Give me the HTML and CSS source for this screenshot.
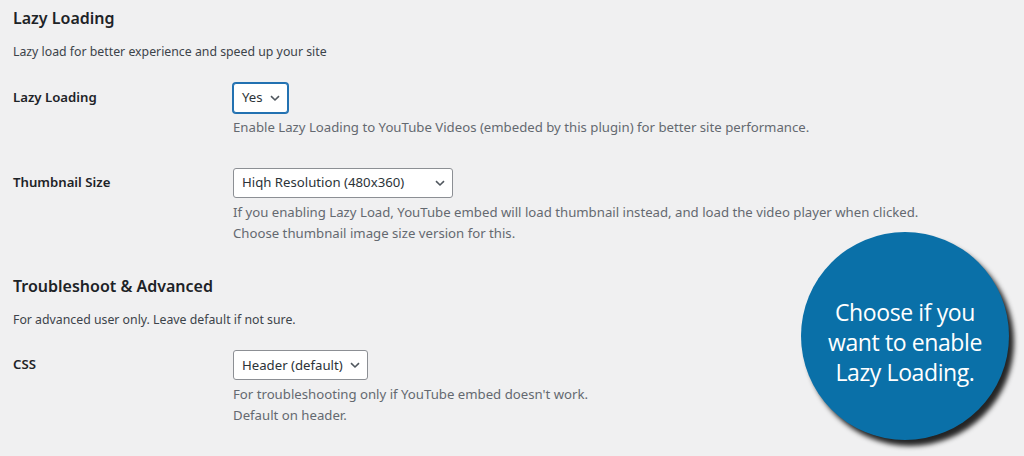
FILE: index.html
```html
<!DOCTYPE html>
<html lang="en">
<head>
	<meta charset="UTF-8">
	<title>Lazy Loading settings</title>
	<link rel="stylesheet" href="styles.css">
</head>
<body>
<div class="wrap">
	<div class="section">
		<h2>Lazy Loading</h2>
		<p class="intro">Lazy load for better experience and speed up your site</p>
		<table class="form-table">
			<tr>
				<th>Lazy Loading</th>
				<td>
					<div class="select focus">Yes
						<svg viewBox="0 0 12 12" width="12" height="12"><path d="M2 4.2 L6 8 L10 4.2" fill="none" stroke="#50575e" stroke-width="1.6"/></svg>
					</div>
					<p class="description">Enable Lazy Loading to YouTube Videos (embeded by this plugin) for better site performance.</p>
				</td>
			</tr>
			<tr>
				<th>Thumbnail Size</th>
				<td>
					<div class="select wide">Hiqh Resolution (480x360)
						<svg viewBox="0 0 12 12" width="12" height="12"><path d="M2 4.2 L6 8 L10 4.2" fill="none" stroke="#50575e" stroke-width="1.6"/></svg>
					</div>
					<p class="description">If you enabling Lazy Load, YouTube embed will load thumbnail instead, and load the video player when clicked.<br>Choose thumbnail image size version for this.</p>
				</td>
			</tr>
		</table>
	</div>
	<div class="section">
		<h2>Troubleshoot &amp; Advanced</h2>
		<p class="intro">For advanced user only. Leave default if not sure.</p>
		<table class="form-table">
			<tr>
				<th>CSS</th>
				<td>
					<div class="select">Header (default)
						<svg viewBox="0 0 12 12" width="12" height="12"><path d="M2 4.2 L6 8 L10 4.2" fill="none" stroke="#50575e" stroke-width="1.6"/></svg>
					</div>
					<p class="description">For troubleshooting only if YouTube embed doesn't work.<br>Default on header.</p>
				</td>
			</tr>
		</table>
	</div>
</div>
<div class="callout">Choose if you<br>want to enable<br>Lazy Loading.</div>
</body>
</html>
```

FILE: styles.css
```css
body {
	margin: 0;
	background: #f0f0f1;
	color: #3c434a;
	font-family: "Noto Sans", "Open Sans", sans-serif;
	font-size: 13px;
}
.wrap {
	padding: 7px 13px 0;
}
.section + .section {
	margin-top: 16px;
}
h2 {
	margin: 0;
	font-size: 16px;
	line-height: 22px;
	font-weight: 600;
	color: #1d2327;
}
.intro {
	margin: 13px 0 6px;
	font-size: 12.3px;
	line-height: 19.5px;
	color: #3c434a;
}
.form-table {
	border-collapse: collapse;
}
.form-table th {
	width: 200px;
	padding: 20px 10px 20px 0;
	text-align: left;
	vertical-align: top;
	font-size: 13.2px;
	line-height: 18px;
	font-weight: 600;
	color: #1d2327;
}
.form-table td {
	padding: 15px 10px;
	vertical-align: top;
	font-size: 13.2px;
	line-height: 21px;
}
.select {
	display: inline-flex;
	align-items: center;
	justify-content: space-between;
	gap: 6px;
	box-sizing: border-box;
	height: 30px;
	padding: 0 6px 0 8px;
	background: #fff;
	border: 1px solid #8c8f94;
	border-radius: 3px;
	color: #2c3338;
	font-size: 13.2px;
}
.select.focus {
	border-color: #2271b1;
	box-shadow: 0 0 0 1px #2271b1;
}
.select.wide {
	width: 220px;
}
.description {
	margin: 4px 0 0;
	color: #646970;
}
.callout {
	position: absolute;
	left: 801px;
	top: 232px;
	width: 208px;
	height: 208px;
	box-sizing: border-box;
	padding-top: 12px;
	border-radius: 50%;
	background: #0a70a8;
	box-shadow: 5px 6px 5px rgba(0, 0, 0, 0.85);
	display: flex;
	align-items: center;
	justify-content: center;
	text-align: center;
	color: #fff;
	font-family: "Open Sans", sans-serif;
	font-size: 23px;
	line-height: 30px;
	letter-spacing: -0.4px;
}
```
